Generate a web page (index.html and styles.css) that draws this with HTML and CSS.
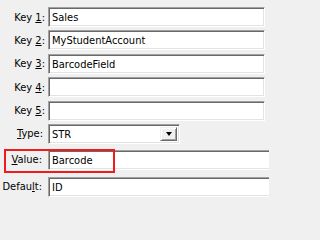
FILE: index.html
```html
<!DOCTYPE html>
<html>
<head>
<meta charset="utf-8">
<link rel="stylesheet" href="styles.css">
</head>
<body>
<div class="form">
  <div class="row r1">
    <span class="label">Key <u>1</u>:</span>
    <div class="field key">Sales</div>
  </div>
  <div class="row">
    <span class="label">Key <u>2</u>:</span>
    <div class="field key">MyStudentAccount</div>
  </div>
  <div class="row">
    <span class="label">Key <u>3</u>:</span>
    <div class="field key">BarcodeField</div>
  </div>
  <div class="row">
    <span class="label">Key <u>4</u>:</span>
    <div class="field key"></div>
  </div>
  <div class="row">
    <span class="label">Key <u>5</u>:</span>
    <div class="field key"></div>
  </div>
  <div class="row">
    <span class="label lt"><u>T</u>ype:</span>
    <div class="field combo"><span class="ctext">STR</span><span class="btn"><span class="arrow"></span></span></div>
  </div>
  <div class="row rv">
    <span class="label lv"><u>V</u>alue:</span>
    <div class="field wide">Barcode</div>
  </div>
  <div class="row rd">
    <span class="label ld">Defau<u>l</u>t:</span>
    <div class="field wide">ID</div>
  </div>
  <div class="highlight"></div>
</div>
</body>
</html>
```
FILE: styles.css
```css
html, body {
  margin: 0;
  padding: 0;
  background: #f0f0f0;
}
body {
  width: 269px;
  height: 200px;
  overflow: hidden;
  font-family: "DejaVu Sans Condensed", "Liberation Sans", sans-serif;
  font-size: 11px;
  color: #000;
}
.form {
  position: relative;
  display: flex;
  flex-direction: column;
  gap: 3.4px;
  padding-top: 7px;
}
.row {
  display: flex;
  align-items: center;
  height: 20px;
}
.label {
  flex: none;
  width: 46px;
  box-sizing: border-box;
  text-align: right;
  padding-right: 1px;
  white-space: nowrap;
}
.lt { padding-right: 3px; }
.lv { padding-right: 4px; }
.ld { padding-right: 4px; }
.field {
  box-sizing: border-box;
  height: 20px;
  background: #fff;
  border-top: 1px solid #a0a0a0;
  border-left: 1px solid #a0a0a0;
  border-right: 1px solid #fff;
  border-bottom: 1px solid #fff;
  box-shadow: inset 1px 1px 0 #696969, inset -1px -1px 0 #e3e3e3;
  padding: 2px 3px 0 3px;
  line-height: 15px;
  white-space: nowrap;
  overflow: hidden;
  flex: none;
}
.label + .field { margin-left: 2px; }
.key { width: 217px; }
.wide { width: 240px; }
.combo {
  width: 132px;
  display: flex;
  justify-content: space-between;
  padding: 0 2px 0 3px;
  align-items: stretch;
}
.ctext { padding-top: 2px; }
.btn {
  width: 17px;
  margin: 2px 0 2px 0;
  box-sizing: border-box;
  background: #f0f0f0;
  border-top: 1px solid #f0f0f0;
  border-left: 1px solid #f0f0f0;
  border-right: 1px solid #696969;
  border-bottom: 1px solid #696969;
  box-shadow: inset 1px 1px 0 #fff, inset -1px -1px 0 #a0a0a0;
  display: flex;
  align-items: center;
  justify-content: center;
}
.arrow {
  width: 0;
  height: 0;
  border-left: 3.5px solid transparent;
  border-right: 3.5px solid transparent;
  border-top: 4px solid #000;
  margin-top: 1px;
}
.rv { margin-top: 2.6px; }
.rd { margin-top: 3.6px; }
.highlight {
  position: absolute;
  left: 4px;
  top: 149px;
  width: 111px;
  height: 24px;
  box-sizing: border-box;
  border: 2px solid #ee1c1c;
}
```
